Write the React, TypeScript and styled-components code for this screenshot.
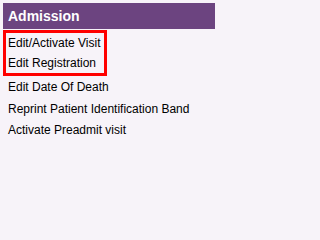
import React from 'react'
import styled, { createGlobalStyle } from 'styled-components'

const GlobalStyle = createGlobalStyle`
    html, body {
        margin: 0;
        padding: 0;
        background-color: #f7f3f9;
    }
`
const DivPanel = styled.div`
    width: 218px;
    height: 200px;
    padding: 3px;
    box-sizing: border-box;
    font-family: "Liberation Sans", Arial, sans-serif;
    background-color: #f7f3f9;
`
const DivHeader = styled.div`
    height: 26px;
    width: 212px;
    background-color: #6c4480;
    color: white;
    font-weight: bold;
    font-size: 14px;
    display: flex;
    align-items: center;
    padding-left: 5px;
    box-sizing: border-box;
`
const DivGroup = styled.div<{ $highlight?: boolean }>`
    display: flex;
    flex-direction: column;
    width: ${p => (p.$highlight ? '104px' : 'auto')};
    box-sizing: border-box;
    margin-top: ${p => (p.$highlight ? '1px' : '0')};
    border: ${p => (p.$highlight ? '3px solid #ff0000' : '0')};
    padding-left: ${p => (p.$highlight ? '2px' : '5px')};
`
const SpanItem = styled.span<{ $compact?: boolean }>`
    font-size: 12px;
    color: #000;
    height: ${p => (p.$compact ? '20px' : '21.5px')};
    line-height: ${p => (p.$compact ? '20px' : '22px')};
    cursor: pointer;
    white-space: nowrap;
`

const highlighted = ['Edit/Activate Visit', 'Edit Registration']
const others = ['Edit Date Of Death', 'Reprint Patient Identification Band', 'Activate Preadmit visit']

function App() {
    return (
        <>
            <GlobalStyle />
            <DivPanel>
                <DivHeader>Admission</DivHeader>
                <DivGroup $highlight>
                    {highlighted.map(item => <SpanItem $compact key={item}>{item}</SpanItem>)}
                </DivGroup>
                <DivGroup>
                    {others.map(item => <SpanItem key={item}>{item}</SpanItem>)}
                </DivGroup>
            </DivPanel>
        </>
    )
}

export default App
